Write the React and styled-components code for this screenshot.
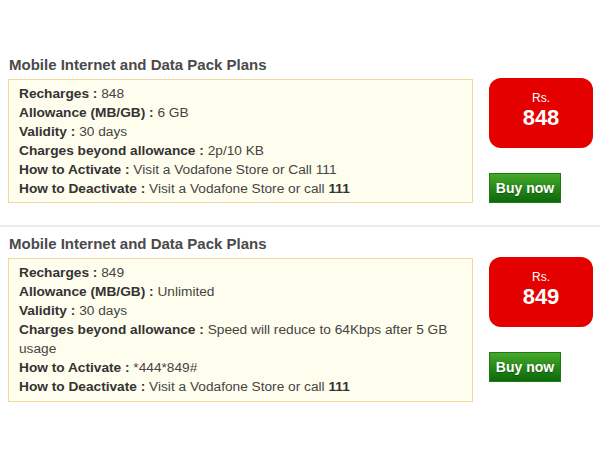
import React from "react";
import styled, { createGlobalStyle } from "styled-components";

const GlobalStyle = createGlobalStyle`
  body {
    margin: 0;
    background: #ffffff;
    font-family: "Liberation Sans", Arial, sans-serif;
  }
`;

const Page = styled.div`
  width: 600px;
  padding-top: 56px;
`;

const Section = styled.section`
  padding: 0 7px 0 8px;
`;

const Title = styled.h2`
  margin: 0 0 5px 1px;
  font-size: 15px;
  line-height: 18px;
  font-weight: bold;
  color: #4a4a4a;
`;

const Row = styled.div`
  display: flex;
  align-items: flex-start;
  gap: 16px;
`;

const InfoBox = styled.div`
  width: 465px;
  box-sizing: border-box;
  background: #fffeee;
  border: 1px solid #f2d89c;
  padding: 5px 10px 4px 10px;
  font-size: 13.7px;
  line-height: 18.9px;
  color: #444;
`;

const Line = styled.div``;

const Label = styled.b`
  color: #333;
`;

const Side = styled.div`
  display: flex;
  flex-direction: column;
  align-items: flex-start;
  gap: 25px;
  margin-top: -1px;
`;

const Price = styled.div`
  width: 104px;
  height: 70px;
  box-sizing: border-box;
  border-radius: 12px;
  background: #e50000;
  color: #fff;
  display: flex;
  flex-direction: column;
  align-items: center;
  padding-top: 13px;
`;

const Currency = styled.span`
  font-size: 12px;
  line-height: 14px;
`;

const Amount = styled.span`
  font-size: 22px;
  line-height: 25px;
  font-weight: bold;
`;

const BuyButton = styled.button`
  width: 72px;
  height: 30px;
  border: 1px solid #1f7a12;
  border-radius: 0;
  padding: 0;
  background: linear-gradient(#46a82a, #0b680b);
  color: #fff;
  font-family: "Liberation Sans", Arial, sans-serif;
  font-size: 14px;
  font-weight: bold;
  cursor: pointer;
  text-shadow: 0 1px 1px rgba(0, 0, 0, 0.35);
`;

const Divider = styled.hr`
  border: 0;
  height: 2px;
  background: #ebebeb;
  margin: 22px 0 8px;
`;

const plans = [
  {
    price: "848",
    rows: [
      ["Recharges", "848"],
      ["Allowance (MB/GB)", "6 GB"],
      ["Validity", "30 days"],
      ["Charges beyond allowance", "2p/10 KB"],
      ["How to Activate", "Visit a Vodafone Store or Call 111"],
      ["How to Deactivate", "Visit a Vodafone Store or call ", "111"],
    ],
  },
  {
    price: "849",
    rows: [
      ["Recharges", "849"],
      ["Allowance (MB/GB)", "Unlimited"],
      ["Validity", "30 days"],
      ["Charges beyond allowance", "Speed will reduce to 64Kbps after 5 GB usage"],
      ["How to Activate", "*444*849#"],
      ["How to Deactivate", "Visit a Vodafone Store or call ", "111"],
    ],
  },
];

const Plan = ({ plan }) => (
  <Section>
    <Title>Mobile Internet and Data Pack Plans</Title>
    <Row>
      <InfoBox>
        {plan.rows.map(([label, value, strong]) => (
          <Line key={label}>
            <Label>{label} :</Label> {value}
            {strong && <Label>{strong}</Label>}
          </Line>
        ))}
      </InfoBox>
      <Side>
        <Price>
          <Currency>Rs.</Currency>
          <Amount>{plan.price}</Amount>
        </Price>
        <BuyButton>Buy now</BuyButton>
      </Side>
    </Row>
  </Section>
);

export default function App() {
  return (
    <>
      <GlobalStyle />
      <Page>
        <Plan plan={plans[0]} />
        <Divider />
        <Plan plan={plans[1]} />
      </Page>
    </>
  );
}
